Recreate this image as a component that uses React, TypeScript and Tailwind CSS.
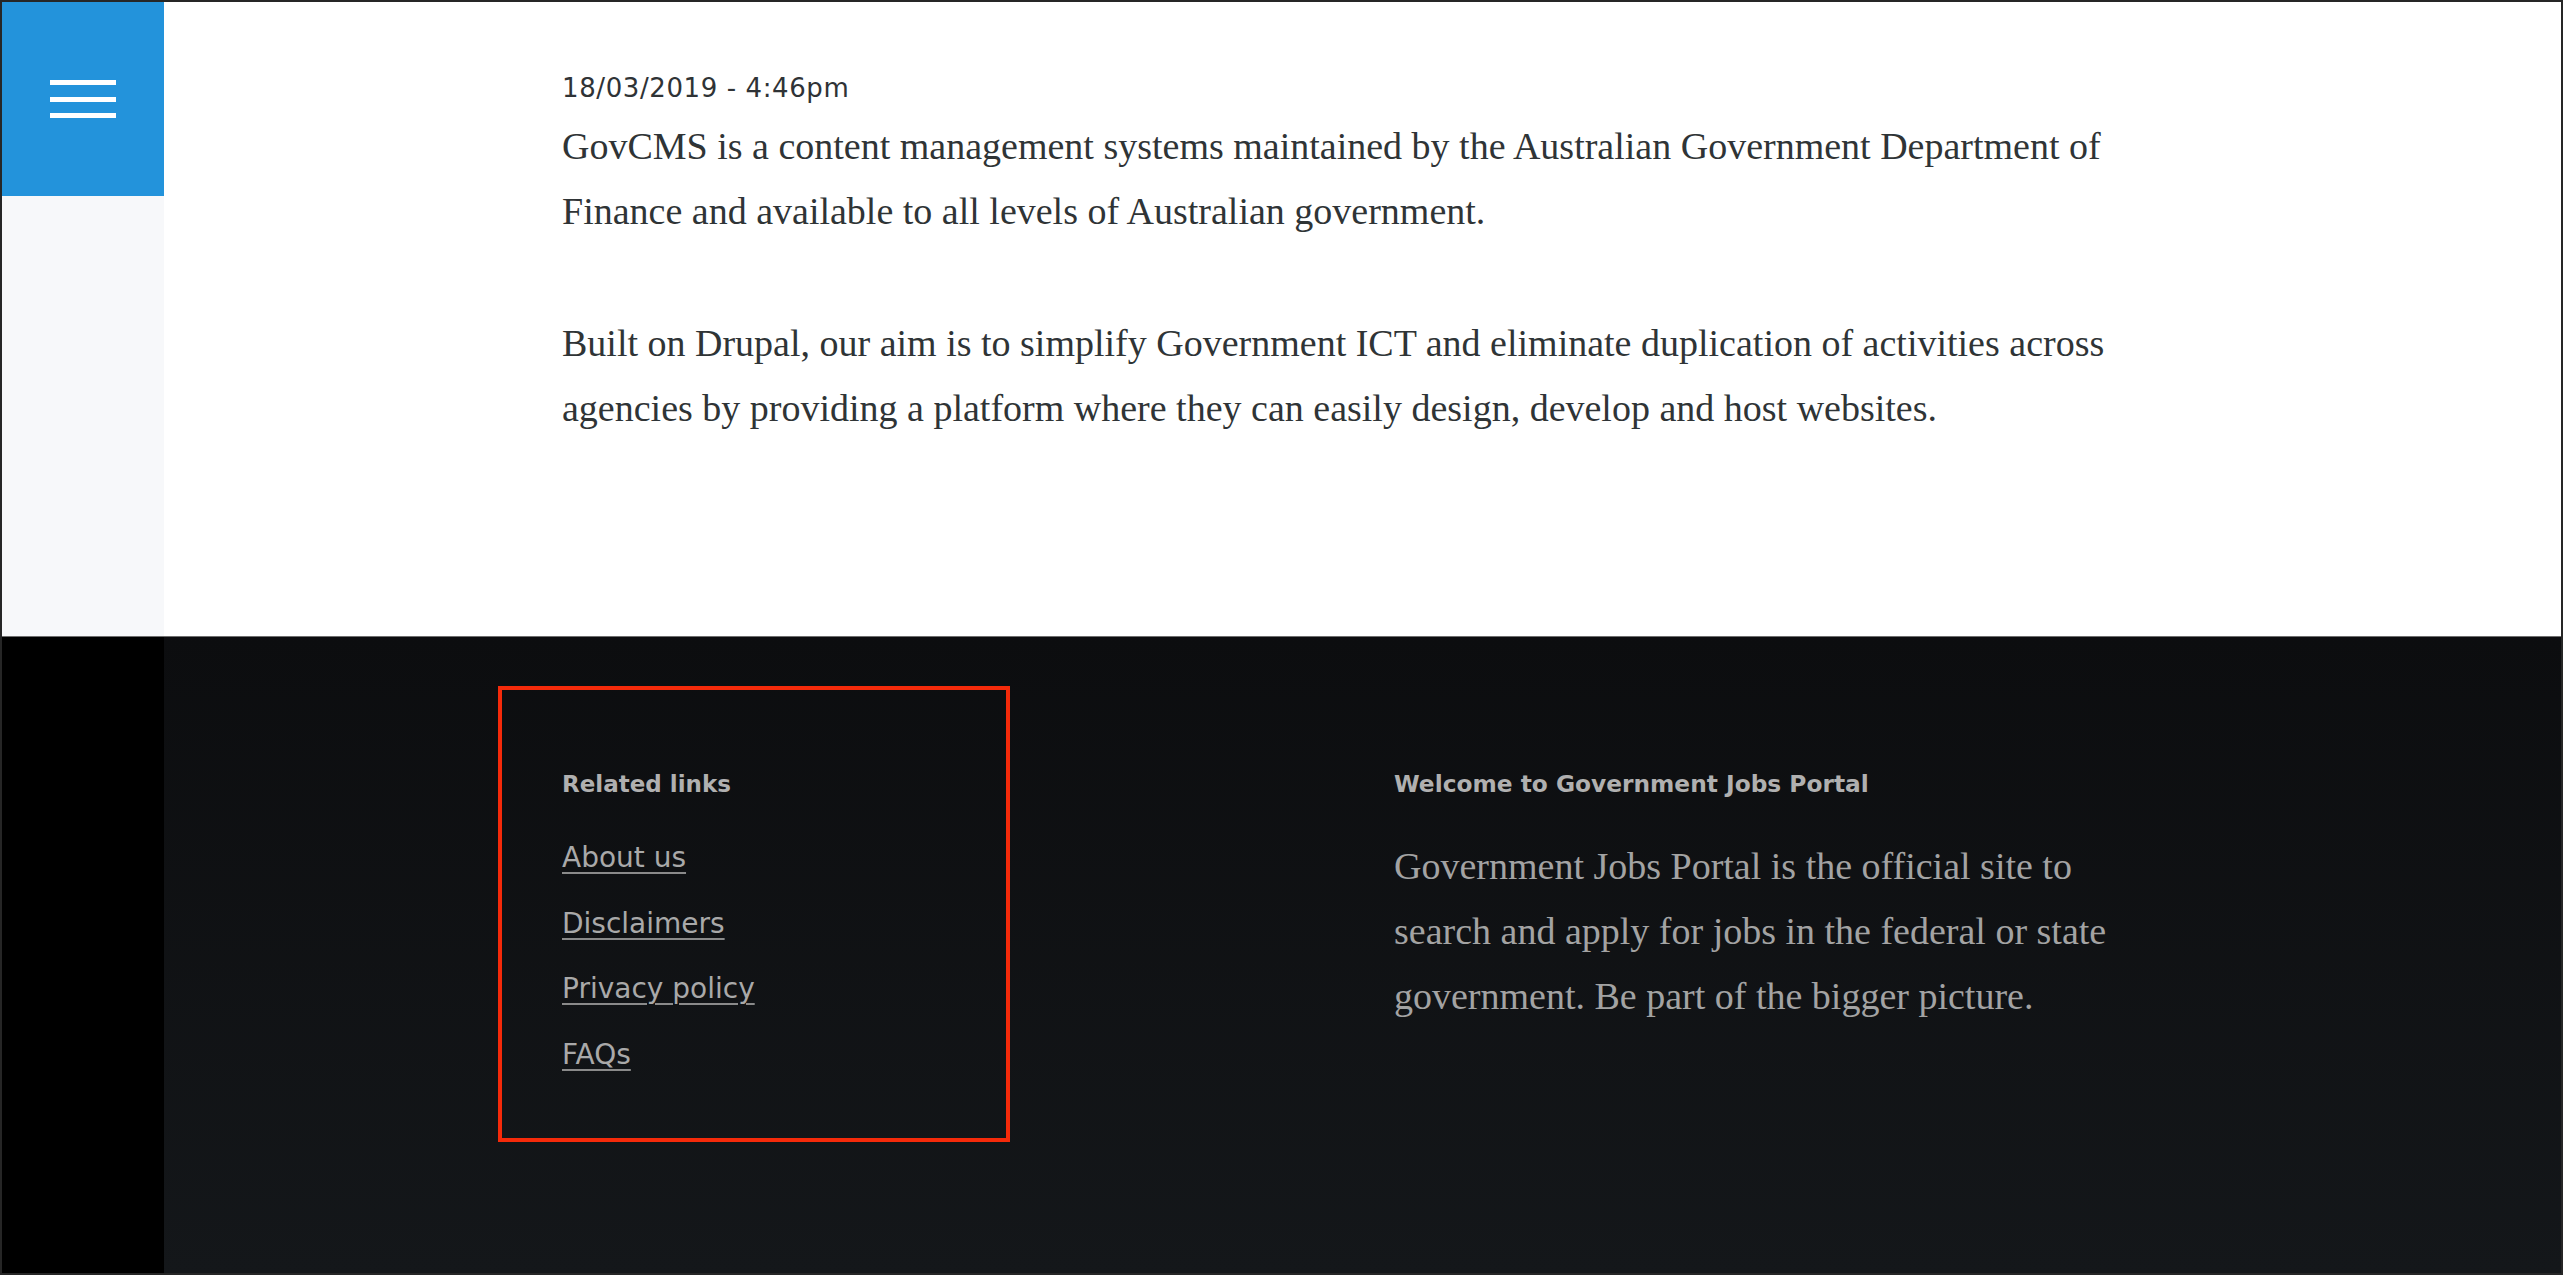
import React from "react";

const sans = "font-['DejaVu_Sans',sans-serif]";
const serif = "font-['Liberation_Serif',serif]";

function Hamburger() {
  return (
    <div className="flex w-[66px] flex-col gap-[11.5px]">
      <span className="block h-[5px] w-full bg-white" />
      <span className="block h-[5px] w-full bg-white" />
      <span className="block h-[5px] w-full bg-white" />
    </div>
  );
}

export default function App() {
  const links = ["About us", "Disclaimers", "Privacy policy", "FAQs"];
  return (
    <div className="flex h-[1275px] w-[2563px] flex-col overflow-hidden border-2 border-[#262626] bg-white">
      {/* Top section */}
      <div className="flex h-[635px] shrink-0 border-b border-[#6e6e6e]">
        <aside className="flex w-[162px] shrink-0 flex-col bg-[#f7f8fa]">
          <button className="flex h-[194px] w-full items-center justify-center bg-[#2393db]" aria-label="Menu">
            <Hamburger />
          </button>
        </aside>
        <main className="flex-1 bg-white pl-[398px] pt-[68px]">
          <div className={`${sans} text-[26px] leading-[36px] tracking-[0.6px] text-[#2f3336]`}>18/03/2019 - 4:46pm</div>
          <div className={`${serif} mt-[8px] w-[1560px] text-[38px] leading-[65px] text-[#2f3436]`}>
            <p>
              GovCMS is a content management systems maintained by the Australian Government Department of Finance and
              available to all levels of Australian government.
            </p>
            <p className="mt-[67px]">
              Built on Drupal, our aim is to simplify Government ICT and eliminate duplication of activities across
              agencies by providing a platform where they can easily design, develop and host websites.
            </p>
          </div>
        </main>
      </div>

      {/* Footer */}
      <footer className="flex flex-1">
        <div className="w-[162px] shrink-0 bg-black" />
        <div className="flex flex-1 items-start bg-gradient-to-b from-[#0c0d0f] to-[#14171a] pl-[334px] pt-[49px]">
          <div className="w-[512px] shrink-0 border-4 border-[#f52a0a] pb-[51px] pl-[60px] pt-[78px]">
            <h2 className={`${sans} mb-[25px] text-[23px] font-bold leading-[32px] text-[#b0b0b0]`}>Related links</h2>
            <ul className={`${sans} text-[28px] leading-[65.5px] text-[#a9a9a9]`}>
              {links.map((l) => (
                <li key={l}>
                  <a
                    href="#"
                    className="underline decoration-[#8a8a8a] decoration-2 underline-offset-[5px]"
                  >
                    {l}
                  </a>
                </li>
              ))}
            </ul>
          </div>
          <div className="ml-[384px] pt-[82px]">
            <h2 className={`${sans} text-[23.3px] font-bold leading-[32px] text-[#b0b0b0]`}>
              Welcome to Government Jobs Portal
            </h2>
            <p className={`${serif} mt-[34px] w-[740px] text-[38px] leading-[65px] text-[#a3a3a3]`}>
              Government Jobs Portal is the official site to search and apply for jobs in the federal or state
              government. Be part of the bigger picture.
            </p>
          </div>
        </div>
      </footer>
    </div>
  );
}
